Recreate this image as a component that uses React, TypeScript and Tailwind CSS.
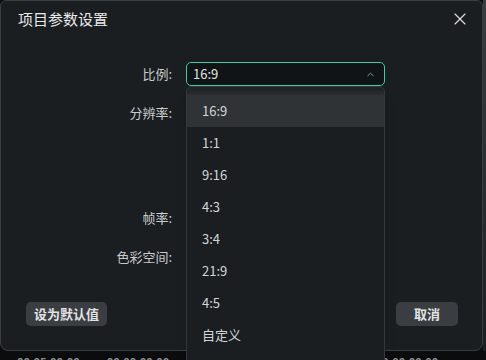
import { ChevronUp, X } from "lucide-react";

const ratios = ["16:9", "1:1", "9:16", "4:3", "3:4", "21:9", "4:5", "自定义"];

const font = { fontFamily: '"Noto Sans CJK SC", "Noto Sans", sans-serif' };

function Row({ label, children, className }: { label: string; children?: React.ReactNode; className?: string }) {
  return (
    <div className={`flex items-center ${className ?? ""}`}>
      <div className="w-[171px] text-right text-[13px] text-[#c9cbcd]">{label}</div>
      <div className="ml-[14px] flex-1">{children}</div>
    </div>
  );
}

export default function App() {
  const selected = "16:9";

  return (
    <div className="relative h-[360px] w-[486px] overflow-hidden bg-[#0b0c0d]" style={font}>
      <div className="flex">
        <div className="flex h-[351px] w-[483px] flex-col rounded-b-lg rounded-t-md border border-[#3a3e42] bg-[#1b1e21]">
          {/* header */}
          <div className="flex h-[36px] items-center justify-between pl-[17px] pr-[12px]">
            <span className="text-[15px] text-[#e8e9ea]">项目参数设置</span>
            <X size={20} strokeWidth={1.4} className="text-[#dcdcdc]" />
          </div>

          {/* form */}
          <div className="mt-[25px] flex flex-col">
            <Row label="比例:" className="h-[24px]">
              <div className="mr-[97px] flex h-[24px] items-center justify-between rounded-[5px] border border-[#41c9a4] bg-[#111417] pl-[6px] pr-[8px]">
                <span className="text-[13px] text-[#e2e3e4]">{selected}</span>
                <ChevronUp size={11} strokeWidth={2} className="text-[#9a9da0]" />
              </div>
            </Row>
            <Row label="分辨率:" className="mt-[15px] h-[24px]" />
            <div className="h-[81px]" />
            <Row label="帧率:" className="h-[24px]" />
            <Row label="色彩空间:" className="mt-[15px] h-[24px]" />
          </div>

          {/* buttons */}
          <div className="mt-[33px] flex justify-between pl-[25px] pr-[24px]">
            <button className="h-[24px] w-[81px] rounded-[5px] bg-[#3a3e43] text-[13px] font-bold text-[#e2e3e4]">
              设为默认值
            </button>
            <button className="h-[24px] w-[62px] rounded-[5px] bg-[#3a3e43] text-[13px] font-bold text-[#e2e3e4]">
              取消
            </button>
          </div>
        </div>
        <div className="h-[351px] flex-1 bg-gradient-to-b from-[#3a3d40] to-[#1d2023]" />
      </div>

      {/* timeline strip peeking below */}
      <div className="mt-[3px] flex gap-[27px] pl-[17px] text-[11px] leading-[14px] font-bold text-[#8c8f92]">
        <span>00:05:00:00</span>
        <span>00:00:00:00</span>
        <span>00:00:00:00</span>
        <span>00:00:00:00</span>
        <span>00:00:00:00</span>
      </div>

      {/* open dropdown */}
      <div className="absolute left-[186px] top-[86px] h-[280px] w-[199px] rounded-md border border-[#34383c] bg-[#1b1e21] shadow-lg">
        <div className="h-[8px] rounded-t-md bg-gradient-to-b from-[#1d2023] to-[#2b2e31]" />
        {ratios.map((r) => (
          <div
            key={r}
            className={`flex h-[32px] items-center pl-[15px] text-[13px] text-[#d3d5d7] ${
              r === selected ? "bg-[#2f3336]" : ""
            }`}
          >
            {r}
          </div>
        ))}
      </div>
    </div>
  );
}
